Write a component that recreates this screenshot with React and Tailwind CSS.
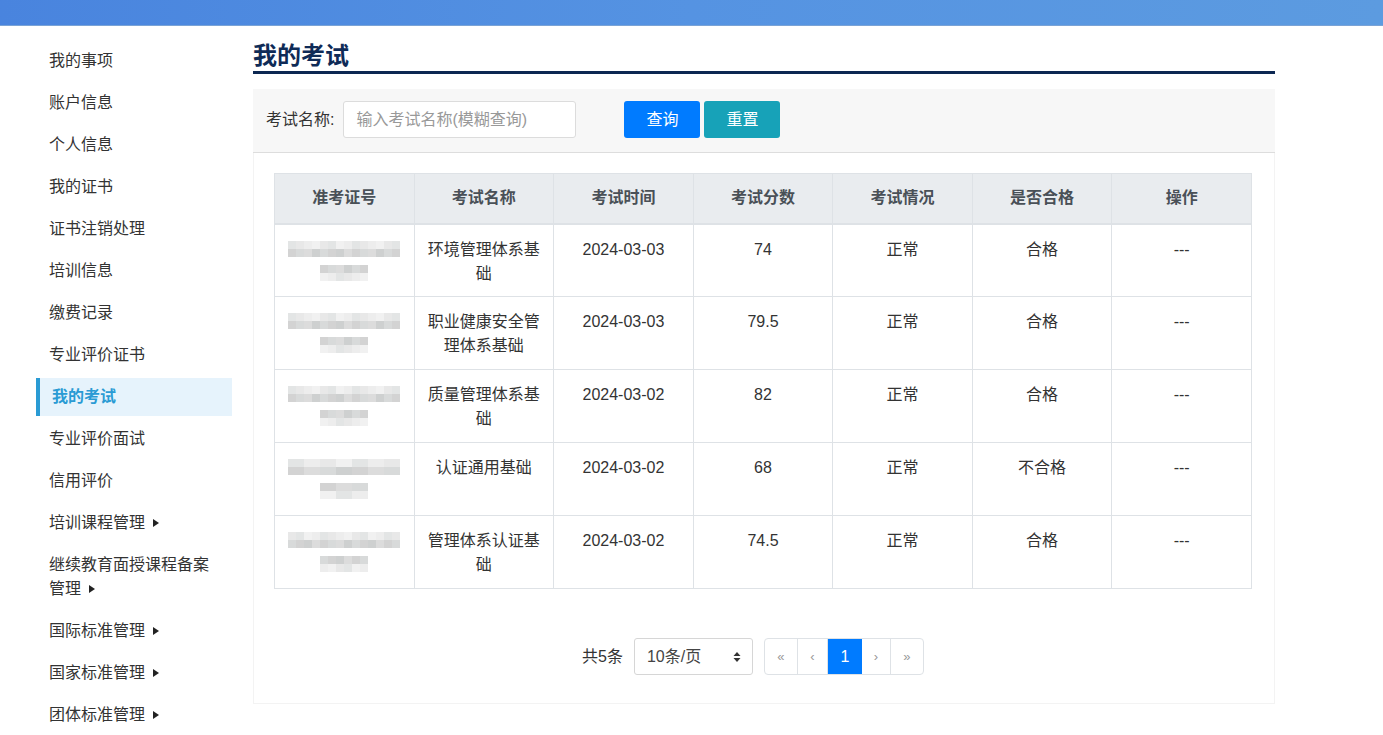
import React from "react";

const menu = [
  { t: "我的事项" },
  { t: "账户信息" },
  { t: "个人信息" },
  { t: "我的证书" },
  { t: "证书注销处理" },
  { t: "培训信息" },
  { t: "缴费记录" },
  { t: "专业评价证书" },
  { t: "我的考试", active: true },
  { t: "专业评价面试" },
  { t: "信用评价" },
  { t: "培训课程管理", arrow: true },
  { t: "继续教育面授课程备案管理", arrow: true },
  { t: "国际标准管理", arrow: true },
  { t: "国家标准管理", arrow: true },
  { t: "团体标准管理", arrow: true },
];

const rows = [
  { name: "环境管理体系基础", time: "2024-03-03", score: "74", status: "正常", pass: "合格" },
  { name: "职业健康安全管理体系基础", time: "2024-03-03", score: "79.5", status: "正常", pass: "合格" },
  { name: "质量管理体系基础", time: "2024-03-02", score: "82", status: "正常", pass: "合格" },
  { name: "认证通用基础", time: "2024-03-02", score: "68", status: "正常", pass: "不合格" },
  { name: "管理体系认证基础", time: "2024-03-02", score: "74.5", status: "正常", pass: "合格" },
];

const shades = [
  "bg-[#d9d9d9]",
  "bg-[#e6e6e6]",
  "bg-[#cfcfcf]",
  "bg-[#ececec]",
  "bg-[#c9cccc]",
  "bg-[#e1e3e3]",
  "bg-[#d4d6d6]",
  "bg-[#f0f0f0]",
];

function Mosaic({ seed }) {
  const line = (cols, rowSeed) => (
    <div className="flex flex-col">
      {[0, 1].map((r) => (
        <div key={r} className="flex">
          {Array.from({ length: cols }).map((_, c) => {
            const idx = (seed * 7 + rowSeed * 13 + r * 5 + c * 3 + ((c * c + seed) % 4)) % shades.length;
            return <div key={c} className={"w-[8px] h-[8px] " + shades[idx]} />;
          })}
        </div>
      ))}
    </div>
  );
  return (
    <div className="flex flex-col items-center gap-[8px] blur-[0.6px] opacity-90">
      {line(14, 1)}
      {line(6, 2)}
    </div>
  );
}

export default function App() {
  const font = { fontFamily: '"Liberation Sans", "Noto Sans CJK SC", sans-serif' };
  return (
    <div className="min-h-[735px] bg-white text-[#333]" style={font}>
      <div className="h-[26px] bg-gradient-to-r from-[#4984de] via-[#5593e2] to-[#5c9be0] border-b border-[#7aa3d6]" />
      <div className="flex pl-[36px] pt-[14px]">
        {/* Sidebar */}
        <div className="w-[196px] shrink-0">
          {menu.map((m) =>
            m.active ? (
              <div key={m.t} className="py-[2px]">
                <div className="bg-[#e6f3fc] border-l-[4px] border-[#2a9bd4] pl-[12px] pr-[13px] py-[7px] text-[16px] leading-6 font-bold text-[#2a9bd4]">
                  {m.t}
                </div>
              </div>
            ) : (
              <div key={m.t} className="px-[13px] py-[9px] text-[16px] leading-6 text-[#333]">
                {m.t}
                {m.arrow && (
                  <span className="inline-block ml-[8px] align-[1px] w-0 h-0 border-l-[6px] border-l-[#222] border-y-[4px] border-y-transparent" />
                )}
              </div>
            )
          )}
        </div>

        {/* Main */}
        <div className="ml-[21px] w-[1022px]">
          <div className="border-b-[3px] border-[#0c2852] text-[24px] leading-[31px] font-bold text-[#0f2b57]">
            我的考试
          </div>

          <div className="mt-[15px] bg-[#f7f7f7] border-b border-[#dddddd] pl-[13px] pt-[12px] pb-[14px] flex items-center">
            <span className="text-[16px] text-[#333] mr-[9px]">考试名称:</span>
            <div className="w-[233px] h-[37px] bg-white border border-[#dcdcdc] rounded-[3px] flex items-center pl-[12px] text-[16px] text-[#999]">
              输入考试名称(模糊查询)
            </div>
            <div className="ml-[48px] w-[76px] h-[37px] rounded-[3px] bg-[#007bff] text-white text-[16px] flex items-center justify-center">
              查询
            </div>
            <div className="ml-[4px] w-[76px] h-[37px] rounded-[3px] bg-[#17a2b8] text-white text-[16px] flex items-center justify-center">
              重置
            </div>
          </div>

          <div className="border border-t-0 border-[#f3f3f3] px-[20px] pt-[20px] pb-[28px]">
            <table className="table-fixed w-[978px] border-collapse text-[16px]">
              <thead>
                <tr className="bg-[#e9ecef] h-[50px]">
                  {["准考证号", "考试名称", "考试时间", "考试分数", "考试情况", "是否合格", "操作"].map((h) => (
                    <th key={h} className="border border-[#dee2e6] border-b-2 font-bold text-[#495057] text-center align-middle">
                      {h}
                    </th>
                  ))}
                </tr>
              </thead>
              <tbody>
                {rows.map((r, i) => (
                  <tr key={i} className="h-[73px]">
                    <td className="border border-[#dee2e6] align-top pt-[16px]">
                      <Mosaic seed={i} />
                    </td>
                    <td className="border border-[#dee2e6] align-top pt-[13px] px-[12px] text-center leading-6 text-[#333]">
                      {r.name}
                    </td>
                    <td className="border border-[#dee2e6] align-top pt-[13px] text-center leading-6 text-[#333]">{r.time}</td>
                    <td className="border border-[#dee2e6] align-top pt-[13px] text-center leading-6 text-[#333]">{r.score}</td>
                    <td className="border border-[#dee2e6] align-top pt-[13px] text-center leading-6 text-[#333]">{r.status}</td>
                    <td className="border border-[#dee2e6] align-top pt-[13px] text-center leading-6 text-[#333]">{r.pass}</td>
                    <td className="border border-[#dee2e6] align-top pt-[13px] text-center leading-6 text-[#333]">---</td>
                  </tr>
                ))}
              </tbody>
            </table>

            <div className="mt-[49px] flex justify-center pr-[22px] items-center">
              <span className="text-[16px] text-[#333] mr-[11px]">共5条</span>
              <div className="w-[119px] h-[37px] border border-[#d6d6d6] rounded-[3px] flex items-center justify-between pl-[12px] pr-[11px] text-[16px] text-[#444]">
                <span>10条/页</span>
                <svg width="8" height="12" viewBox="0 0 8 12">
                  <path d="M4 1 L7.5 5 L0.5 5 Z" fill="#333" />
                  <path d="M4 11 L7.5 7 L0.5 7 Z" fill="#333" />
                </svg>
              </div>
              <div className="ml-[11px] flex h-[37px] border border-[#dee2e6] rounded-[4px] overflow-hidden text-[#999] text-[13px]">
                <div className="w-[33px] flex items-center justify-center border-r border-[#dee2e6]">«</div>
                <div className="w-[30px] flex items-center justify-center border-r border-[#dee2e6]">‹</div>
                <div className="w-[34px] flex items-center justify-center bg-[#007bff] text-white text-[16px]">1</div>
                <div className="w-[29px] flex items-center justify-center border-r border-[#dee2e6]">›</div>
                <div className="w-[32px] flex items-center justify-center">»</div>
              </div>
            </div>
          </div>
        </div>
      </div>
    </div>
  );
}
